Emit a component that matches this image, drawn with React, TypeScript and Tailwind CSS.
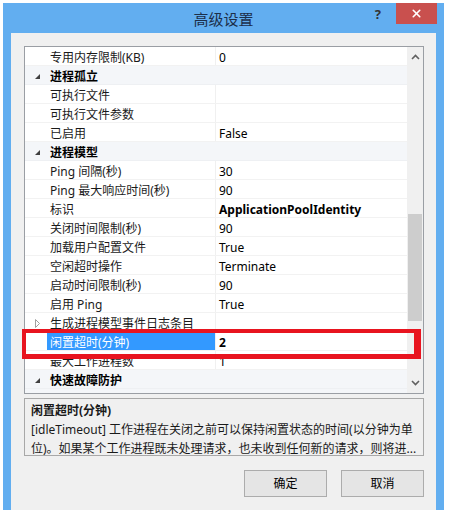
import { X } from 'lucide-react';

type Row = { label: string; value?: string; cat?: boolean; bold?: boolean; selected?: boolean; collapsed?: boolean };

const rows: Row[] = [
  { label: '专用内存限制(KB)', value: '0' },
  { label: '进程孤立', cat: true },
  { label: '可执行文件', value: '' },
  { label: '可执行文件参数', value: '' },
  { label: '已启用', value: 'False' },
  { label: '进程模型', cat: true },
  { label: 'Ping 间隔(秒)', value: '30' },
  { label: 'Ping 最大响应时间(秒)', value: '90' },
  { label: '标识', value: 'ApplicationPoolIdentity', bold: true },
  { label: '关闭时间限制(秒)', value: '90' },
  { label: '加载用户配置文件', value: 'True' },
  { label: '空闲超时操作', value: 'Terminate' },
  { label: '启动时间限制(秒)', value: '90' },
  { label: '启用 Ping', value: 'True' },
  { label: '生成进程模型事件日志条目', value: '', collapsed: true },
  { label: '闲置超时(分钟)', value: '2', bold: true, selected: true },
  { label: '最大工作进程数', value: '1' },
  { label: '快速故障防护', cat: true },
  { label: '', cat: true },
];

const font = { fontFamily: '"Noto Sans", "Noto Sans CJK SC", sans-serif' };

function Expanded() {
  return (
    <svg width="7" height="7" viewBox="0 0 7 7">
      <path d="M6 1 L6 6 L1 6 Z" fill="#404040" />
    </svg>
  );
}

function Collapsed() {
  return (
    <svg width="7" height="9" viewBox="0 0 7 9">
      <path d="M1.5 0.5 L5.5 4.5 L1.5 8.5 Z" fill="none" stroke="#a0a0a0" />
    </svg>
  );
}

function GridRow({ row }: { row: Row }) {
  if (row.cat) {
    return (
      <div className="flex h-[19px] shrink-0 items-center bg-[#f4f6f9] border-b border-[#eef0f3]">
        <div className="w-[22px] flex justify-center pl-[2px] pt-[2px]">{row.label && <Expanded />}</div>
        <div className="pl-[3px] pt-[3px] font-bold text-[12px] text-black">{row.label}</div>
      </div>
    );
  }
  return (
    <div className="flex h-[19px] shrink-0 items-stretch border-b border-[#f2f2f2]">
      <div className="w-[22px] flex items-center justify-center pl-[2px] pt-[2px] bg-white">{row.collapsed && <Collapsed />}</div>
      <div
        className={`w-[168px] flex items-center pl-[3px] pt-[3px] text-[12px] whitespace-nowrap overflow-hidden ${
          row.selected ? 'bg-[#3399ff] text-white' : 'bg-white text-[#1a1a1a]'
        }`}
      >
        {row.label}
      </div>
      <div className="w-px bg-[#f0f0f0]" />
      <div className={`flex-1 flex items-center pl-[3px] pt-[3px] text-[12px] bg-white text-black ${row.bold ? 'font-bold' : ''}`}>
        {row.value}
      </div>
    </div>
  );
}

export default function App() {
  return (
    <div className="w-[449px] h-[510px] bg-white overflow-hidden pt-[3px] pl-[3px]" style={font}>
      <div className="w-[441px] h-[520px] bg-[#62aef0] px-[8px] flex flex-col">
        <div className="h-[30px] grid grid-cols-[1fr_auto_1fr] items-start">
          <div />
          <div className="pt-[5px] text-[15px] text-[#1c2f4a]">高级设置</div>
          <div className="flex justify-end items-start">
            <span className="mt-[2px] mr-[15px] text-[13px] font-bold text-[#333]">?</span>
            <div className="w-[41px] h-[21px] bg-[#c9504e] flex items-center justify-center mr-[-1px]">
              <X size={13} strokeWidth={3} className="text-white" />
            </div>
          </div>
        </div>
        <div className="flex-1 bg-[#f0f0f0] pt-[13px] px-[13px] relative">
          <div className="w-[400px] h-[348px] border border-[#9a9ea4] flex bg-white">
            <div className="w-[382px] flex flex-col overflow-hidden">
              {rows.map((r, i) => (
                <GridRow key={i} row={r} />
              ))}
            </div>
            <div className="w-[16px] bg-[#f0f0f0] flex flex-col items-center">
              <svg width="9" height="17" viewBox="0 0 9 17" className="mt-[1px]">
                <path d="M1 11 L4.5 7.5 L8 11" fill="none" stroke="#606060" strokeWidth="1.6" />
              </svg>
              <div className="mt-[149px] w-[14px] h-[107px] bg-[#cdcdcd]" />
              <div className="flex-1" />
              <svg width="9" height="17" viewBox="0 0 9 17" className="mb-[1px]">
                <path d="M1 6 L4.5 9.5 L8 6" fill="none" stroke="#606060" strokeWidth="1.6" />
              </svg>
            </div>
          </div>
          <div className="mt-[4px] w-[400px] h-[58px] border border-[#a8a8a8] bg-[#f0f0f0] px-[6px] pt-[2px] text-[12px] leading-[19px] text-[#1a1a1a]">
            <div className="font-bold">闲置超时(分钟)</div>
            <div className="whitespace-nowrap overflow-hidden">[idleTimeout] 工作进程在关闭之前可以保持闲置状态的时间(以分钟为单</div>
            <div className="whitespace-nowrap overflow-hidden">位)。如果某个工作进程既未处理请求，也未收到任何新的请求，则将进...</div>
          </div>
          <div className="w-[400px] mt-[14px] flex justify-end gap-[14px]">
            <button className="w-[83px] h-[27px] border border-[#acacac] bg-[#e5e5e5] text-[12px] text-black">确定</button>
            <button className="w-[83px] h-[27px] border border-[#acacac] bg-[#e5e5e5] text-[12px] text-black">取消</button>
          </div>
          <div className="absolute left-[11px] top-[296px] w-[399px] h-[30px] border-[#e8141f] border-t-[4px] border-l-[4px] border-b-[5px] border-r-[7px]" />
        </div>
      </div>
    </div>
  );
}
